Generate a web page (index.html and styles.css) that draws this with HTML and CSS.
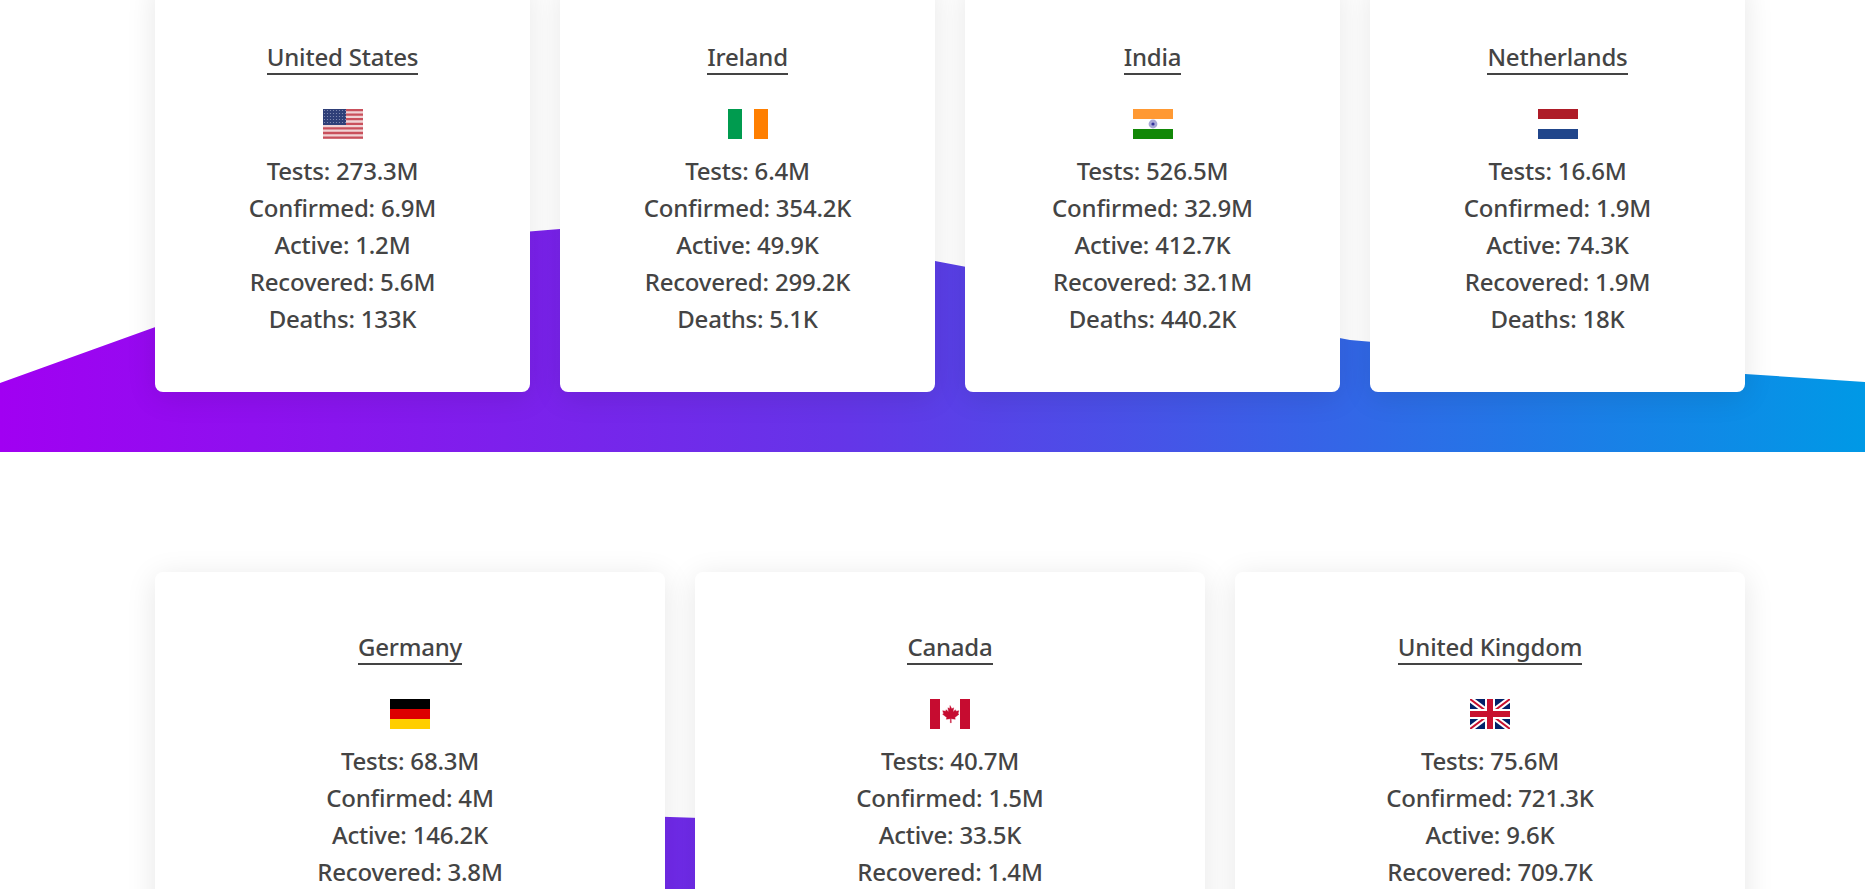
FILE: index.html
```html
<!DOCTYPE html>
<html>
<head>
  <title>Covid Stats</title>
  <link rel="stylesheet" href="styles.css">
</head>
<body>
  <section class="band band-top">
    <div class="wave"></div>
    <div class="cards">
      <div class="card">
        <h3 class="country"><span>United States</span></h3>
        <svg class="flag" viewBox="0 0 40 30">
          <defs>
            <pattern id="stars" width="3" height="3" patternUnits="userSpaceOnUse"><rect width="3" height="3" fill="#2f3f78"/><circle cx="1.5" cy="1.5" r=".6" fill="#8d96b8"/></pattern>
          </defs>
          <rect width="40" height="30" fill="#f0d4d6"/>
          <path d="M0 1h40M0 5.6h40M0 10.2h40M0 14.8h40M0 19.4h40M0 24h40M0 28.6h40" stroke="#c9505c" stroke-width="2.3"/>
          <rect width="23" height="16" fill="url(#stars)"/>
        </svg>
        <p>Tests: 273.3M</p>
        <p>Confirmed: 6.9M</p>
        <p>Active: 1.2M</p>
        <p>Recovered: 5.6M</p>
        <p>Deaths: 133K</p>
      </div>
      <div class="card">
        <h3 class="country"><span>Ireland</span></h3>
        <svg class="flag" viewBox="0 0 40 30">
          <rect width="14" height="30" fill="#009b4f"/>
          <rect x="26" width="14" height="30" fill="#ff7f00"/>
        </svg>
        <p>Tests: 6.4M</p>
        <p>Confirmed: 354.2K</p>
        <p>Active: 49.9K</p>
        <p>Recovered: 299.2K</p>
        <p>Deaths: 5.1K</p>
      </div>
      <div class="card">
        <h3 class="country"><span>India</span></h3>
        <svg class="flag" viewBox="0 0 40 30">
          <rect width="40" height="10" fill="#ff9933"/>
          <rect y="20" width="40" height="10" fill="#128807"/>
          <circle cx="20" cy="15" r="4.4" fill="#a9a9d6"/>
          <circle cx="20" cy="15" r="1.6" fill="#34349c"/>
        </svg>
        <p>Tests: 526.5M</p>
        <p>Confirmed: 32.9M</p>
        <p>Active: 412.7K</p>
        <p>Recovered: 32.1M</p>
        <p>Deaths: 440.2K</p>
      </div>
      <div class="card">
        <h3 class="country"><span>Netherlands</span></h3>
        <svg class="flag" viewBox="0 0 40 30">
          <rect width="40" height="10" fill="#ae1c28"/>
          <rect y="20" width="40" height="10" fill="#21468b"/>
        </svg>
        <p>Tests: 16.6M</p>
        <p>Confirmed: 1.9M</p>
        <p>Active: 74.3K</p>
        <p>Recovered: 1.9M</p>
        <p>Deaths: 18K</p>
      </div>
    </div>
  </section>

  <section class="band band-bottom">
    <div class="wave wave-low"></div>
    <div class="cards">
      <div class="card">
        <h3 class="country"><span>Germany</span></h3>
        <svg class="flag" viewBox="0 0 40 30">
          <rect width="40" height="10" fill="#000"/>
          <rect y="10" width="40" height="10" fill="#dd0000"/>
          <rect y="20" width="40" height="10" fill="#ffce00"/>
        </svg>
        <p>Tests: 68.3M</p>
        <p>Confirmed: 4M</p>
        <p>Active: 146.2K</p>
        <p>Recovered: 3.8M</p>
      </div>
      <div class="card">
        <h3 class="country"><span>Canada</span></h3>
        <svg class="flag" viewBox="0 0 40 30">
          <rect width="10" height="30" fill="#c60c30"/>
          <rect x="30" width="10" height="30" fill="#c60c30"/>
          <path d="M20 6.5l1.8 3.3 1.9-1-.7 4.3 2.4-2.4.6 1.5 2.9-.5-.9 2.9 1 .6-4.2 3.4.5 1.6-4.2-.5.2 4h-1l.2-4-4.2.5.5-1.6-4.2-3.4 1-.6-.9-2.9 2.9.5.6-1.5 2.4 2.4-.7-4.3 1.9 1z" fill="#c60c30" stroke="#c60c30" stroke-width=".4"/>
        </svg>
        <p>Tests: 40.7M</p>
        <p>Confirmed: 1.5M</p>
        <p>Active: 33.5K</p>
        <p>Recovered: 1.4M</p>
      </div>
      <div class="card">
        <h3 class="country"><span>United Kingdom</span></h3>
        <svg class="flag" viewBox="0 0 40 30">
          <rect width="40" height="30" fill="#012169"/>
          <path d="M0 0l40 30M40 0L0 30" stroke="#fff" stroke-width="6"/>
          <path d="M0 0l40 30M40 0L0 30" stroke="#c8102e" stroke-width="2"/>
          <path d="M20 0v30M0 15h40" stroke="#fff" stroke-width="10"/>
          <path d="M20 0v30M0 15h40" stroke="#c8102e" stroke-width="6"/>
        </svg>
        <p>Tests: 75.6M</p>
        <p>Confirmed: 721.3K</p>
        <p>Active: 9.6K</p>
        <p>Recovered: 709.7K</p>
      </div>
    </div>
  </section>
</body>
</html>
```

FILE: styles.css
```css
html, body {
  margin: 0;
  padding: 0;
  height: 889px;
  overflow: hidden;
  background-color: #fff;
}

body {
  font-family: "Noto Sans", "Open Sans", sans-serif;
  font-size: 24px;
  font-weight: 500;
  letter-spacing: -0.2px;
  color: #444;
}

.band {
  position: relative;
}

.band-top {
  display: flow-root;
  height: 452px;
}

.band-bottom {
  height: 437px;
  padding-top: 120px;
  box-sizing: border-box;
  overflow: hidden;
}

/* coloured shape behind the cards */
.wave {
  position: absolute;
  top: 0;
  left: 0;
  width: 100%;
  height: 452px;
  background: linear-gradient(90deg, #a100f2, #6535e8 45%, #0099e6);
  clip-path: polygon(0 383px, 389px 243px, 560px 229px, 640px 222px, 700px 224px, 935px 261px, 1350px 340px, 1745px 374px, 1865px 382px, 1865px 452px, 0 452px);
}

.wave-low {
  top: 142px;
}

.cards {
  position: relative;
  display: flex;
  gap: 30px;
  padding: 0 120px 0 155px;
}

.band-top .cards {
  margin-top: -18px;
}

.card {
  flex: 1;
  height: 410px;
  padding-top: 59px;
  box-sizing: border-box;
  background-color: #fff;
  border-radius: 8px;
  box-shadow: 0 5px 30px rgba(0, 0, 0, 0.1);
  text-align: center;
}

.country {
  margin: 0 0 34px;
  font-size: 24px;
  font-weight: 500;
  line-height: 32px;
}

.country span {
  display: inline-block;
  border-bottom: 2px solid #444;
}

.flag {
  display: block;
  width: 40px;
  height: 30px;
  margin: 0 auto 13px;
}

.card p {
  margin: 0;
  line-height: 37px;
}
```
